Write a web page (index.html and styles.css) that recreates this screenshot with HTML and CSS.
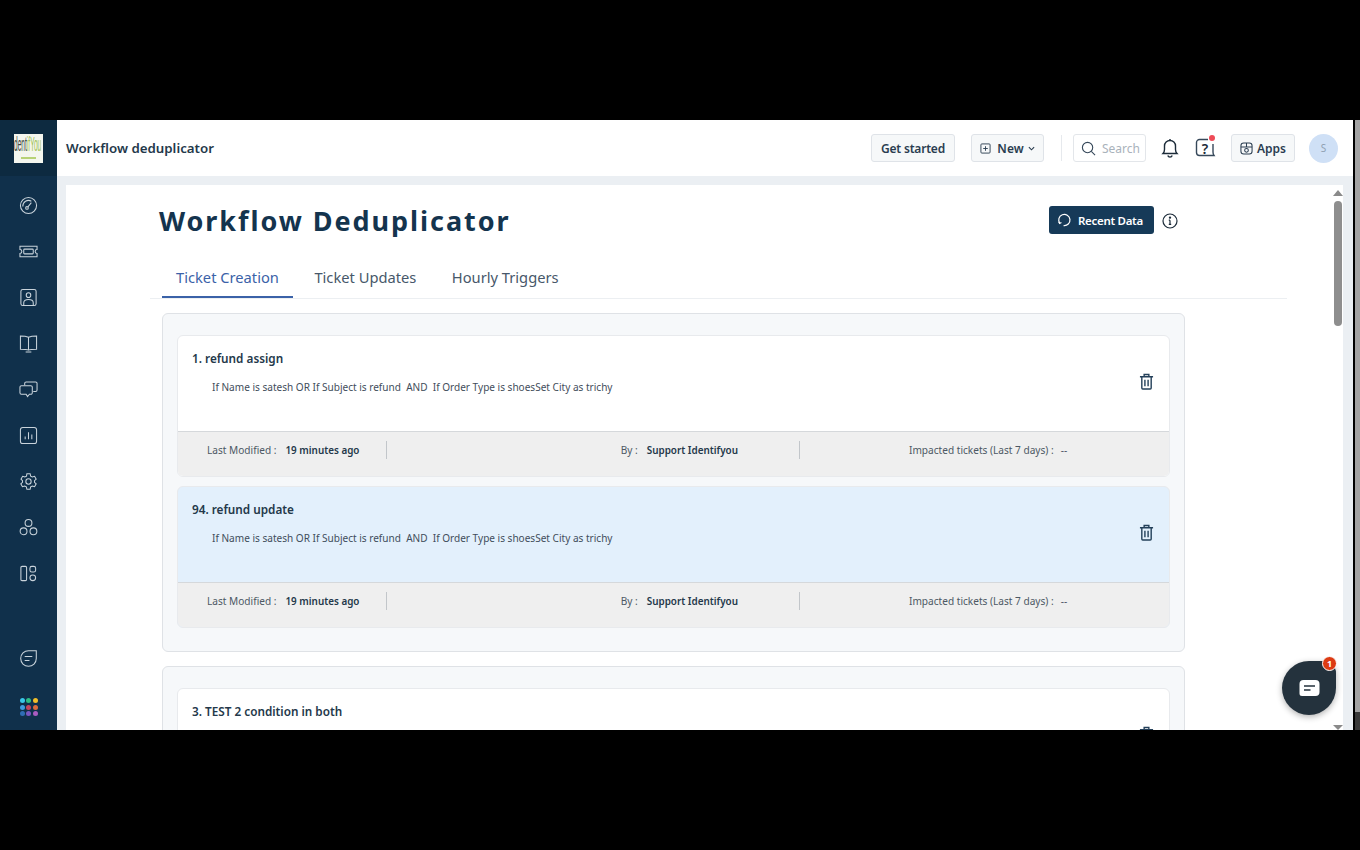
FILE: index.html
```html
<!DOCTYPE html>
<html lang="en">
<head>
    <meta charset="utf-8">
    <title>Workflow deduplicator</title>
    <link rel="stylesheet" href="styles.css">
</head>
<body>
    <div class="screen">
        <div class="app">
            <aside class="sidebar">
                <div class="logo-box">
                    <div class="logo">
                        <div class="logo-word"><span class="logo-dark">dent</span><span class="logo-green">ifYou</span></div>
                        <div class="logo-sub"></div>
                    </div>
                </div>
                <nav class="side-nav">
                    <svg class="side-icon" viewBox="0 0 20 20"><circle cx="10" cy="10" r="8.500"/><circle cx="8.400" cy="12.600" r="1.400"/><path d="M9.400 11.500 13 7M4 11a6 6 0 0 1 9-5.500"/></svg>
                    <svg class="side-icon" viewBox="0 0 20 20"><path d="M1 4.500h18V8a2 2 0 0 0 0 4v3.500H1V12a2 2 0 0 0 0-4z"/><rect x="5" y="7.500" width="10" height="5" rx=".8"/></svg>
                    <svg class="side-icon" viewBox="0 0 20 20"><rect x="2" y="1.500" width="16" height="17" rx="2"/><circle cx="10" cy="7.500" r="2.400"/><path d="M5 18.500v-3c0-2.200 1.800-3.500 5-3.500s5 1.300 5 3.500v3"/></svg>
                    <svg class="side-icon" viewBox="0 0 20 20"><path d="M10 3.500C8 2.500 5 2 1.500 2v14c3.500 0 6.500 0 8.500 1 2-1 5-1 8.500-1V2C15 2 12 2.500 10 3.500zM10 3.500V17M7 19h6"/></svg>
                    <svg class="side-icon" viewBox="0 0 20 20"><path d="M6 5.500V3.500A1.500 1.500 0 0 1 7.500 2h10A1.500 1.500 0 0 1 19 3.500v7a1.500 1.500 0 0 1-1.500 1.500H15"/><path d="M2.500 6h10A1.500 1.500 0 0 1 14 7.500v6a1.500 1.500 0 0 1-1.500 1.500H11l-2 2.500L7.500 15h-5A1.500 1.500 0 0 1 1 13.500v-6A1.500 1.500 0 0 1 2.500 6z"/></svg>
                    <svg class="side-icon" viewBox="0 0 20 20"><rect x="1.500" y="1.500" width="17" height="17" rx="2.500"/><path d="M6.500 14v-3M10 14V6.500M13.500 14V9"/></svg>
                    <svg class="side-icon" viewBox="0 0 20 20"><circle cx="10" cy="10" r="2.800"/><path d="M8.300 1.800h3.400l.6 2.500 1.700 1 2.400-.8 1.700 3-1.800 1.700v1.600l1.800 1.700-1.700 3-2.400-.8-1.700 1-.6 2.500H8.300l-.6-2.500-1.700-1-2.400.8-1.700-3 1.800-1.700V9.200L2.100 7.500l1.700-3 2.400.8 1.700-1z"/></svg>
                    <svg class="side-icon" viewBox="0 0 20 20"><circle cx="10" cy="5.200" r="3.600"/><circle cx="4.800" cy="14" r="3.600"/><circle cx="15.200" cy="14" r="3.600"/></svg>
                    <svg class="side-icon" viewBox="0 0 20 20"><rect x="2" y="2.500" width="6" height="15" rx="1.200"/><rect x="11.500" y="2.500" width="6" height="6" rx="2"/><circle cx="14.500" cy="14.500" r="3"/></svg>
                </nav>
                <div class="side-bottom">
                    <svg class="side-icon" viewBox="0 0 20 20"><path d="M10 1.800h8.200V10a8.200 8.200 0 1 1-8.200-8.200z"/><path d="M6 8h8M6 12h5"/></svg>
                    <div class="dots">
                        <i class="dot d1"></i><i class="dot d2"></i><i class="dot d3"></i>
                        <i class="dot d4"></i><i class="dot d5"></i><i class="dot d6"></i>
                        <i class="dot d7"></i><i class="dot d8"></i><i class="dot d9"></i>
                    </div>
                </div>
            </aside>

            <div class="main">
                <header class="topbar">
                    <div class="page-name">Workflow deduplicator</div>
                    <div class="top-actions">
                        <button class="top-btn started">Get started</button>
                        <button class="top-btn new">
                            <svg class="small-icon" viewBox="0 0 12 12"><rect x="1" y="1" width="10" height="10" rx="1"/><path d="M6 3.500v5M3.500 6h5"/></svg>
                            New
                            <svg class="caret" viewBox="0 0 8 5"><path d="M1 1l3 3 3-3"/></svg>
                        </button>
                        <span class="top-divider"></span>
                        <div class="search">
                            <svg class="search-icon" viewBox="0 0 16 16"><circle cx="7" cy="7" r="5.500"/><path d="M11 11l4 4"/></svg>
                            <span>Search</span>
                        </div>
                        <svg class="bell" viewBox="0 0 18 20"><path d="M2 15.500c1-1 1.500-2 1.500-4V8a5.500 5.500 0 0 1 11 0v3.500c0 2 .5 3 1.500 4z"/><path d="M9 1v1.500M6.800 17.500a2.300 2.300 0 0 0 4.400 0"/></svg>
                        <div class="help">
                            <svg class="help-icon" viewBox="0 0 22 22"><path d="M14 2.500H5.500a3 3 0 0 0-3 3v10a3 3 0 0 0 3 3H20c-.8-1-1-2-1-3.500V7"/></svg>
                            <span class="help-mark">?</span>
                            <i class="help-dot"></i>
                        </div>
                        <button class="top-btn apps">
                            <svg class="apps-icon" viewBox="0 0 14 14"><rect x="1" y="1" width="12" height="12" rx="3"/><path d="M7 1v4M1 5.500h12"/><circle cx="7" cy="9" r="2"/></svg>
                            Apps
                        </button>
                        <div class="avatar">S</div>
                    </div>
                </header>

                <div class="content-wrap">
                    <div class="content">
                        <div class="title-row">
                            <h1>Workflow Deduplicator</h1>
                            <div class="title-actions">
                                <button class="recent">
                                    <svg class="recent-icon" viewBox="0 0 16 16"><path d="M3 11A6 6 0 1 1 7 13.400"/><path d="M1.800 9.300l1 1.900 1.900-1"/></svg>
                                    Recent Data
                                </button>
                                <svg class="info" viewBox="0 0 16 16"><circle cx="8" cy="8" r="7"/><path d="M8 7.200v4M6.800 11.300h2.400M6.800 7.200H8"/><circle class="info-dot" cx="8" cy="4.600" r=".6"/></svg>
                            </div>
                        </div>

                        <div class="tabs">
                            <div class="tab active">Ticket Creation</div>
                            <div class="tab">Ticket Updates</div>
                            <div class="tab">Hourly Triggers</div>
                        </div>

                        <section class="group">
                            <div class="rule">
                                <div class="rule-body">
                                    <div>
                                        <div class="rule-name">1. refund assign</div>
                                        <div class="rule-desc">If Name is satesh OR If Subject is refund &nbsp;AND &nbsp;If Order Type is shoesSet City as trichy</div>
                                    </div>
                                    <svg class="trash" viewBox="0 0 16 18"><path d="M1 4h14M5.500 4V1.500h5V4M3 4v12a1 1 0 0 0 1 1h8a1 1 0 0 0 1-1V4M6.300 7v7M9.700 7v7"/></svg>
                                </div>
                                <div class="rule-foot">
                                    <div class="foot-col col-modified"><span>Last Modified :</span><b>19 minutes ago</b></div>
                                    <div class="foot-col col-by"><span>By :</span><b>Support Identifyou</b></div>
                                    <div class="foot-col col-impact"><span>Impacted tickets (Last 7 days) :</span><span>--</span></div>
                                </div>
                            </div>
                            <div class="rule selected">
                                <div class="rule-body">
                                    <div>
                                        <div class="rule-name">94. refund update</div>
                                        <div class="rule-desc">If Name is satesh OR If Subject is refund &nbsp;AND &nbsp;If Order Type is shoesSet City as trichy</div>
                                    </div>
                                    <svg class="trash" viewBox="0 0 16 18"><path d="M1 4h14M5.500 4V1.500h5V4M3 4v12a1 1 0 0 0 1 1h8a1 1 0 0 0 1-1V4M6.300 7v7M9.700 7v7"/></svg>
                                </div>
                                <div class="rule-foot">
                                    <div class="foot-col col-modified"><span>Last Modified :</span><b>19 minutes ago</b></div>
                                    <div class="foot-col col-by"><span>By :</span><b>Support Identifyou</b></div>
                                    <div class="foot-col col-impact"><span>Impacted tickets (Last 7 days) :</span><span>--</span></div>
                                </div>
                            </div>
                        </section>

                        <section class="group">
                            <div class="rule">
                                <div class="rule-body">
                                    <div>
                                        <div class="rule-name">3. TEST 2 condition in both</div>
                                    </div>
                                    <svg class="trash" viewBox="0 0 16 18"><path d="M1 4h14M5.500 4V1.500h5V4M3 4v12a1 1 0 0 0 1 1h8a1 1 0 0 0 1-1V4M6.300 7v7M9.700 7v7"/></svg>
                                </div>
                            </div>
                        </section>
                    </div>

                    <div class="scrollbar">
                        <i class="arrow-up"></i>
                        <i class="thumb"></i>
                        <i class="arrow-down"></i>
                    </div>

                    <div class="chat">
                        <svg class="chat-icon" viewBox="0 0 20 16"><path d="M4 0h12a4 4 0 0 1 4 4v8a4 4 0 0 1-4 4H2.500A2.500 2.500 0 0 1 0 13.500V4a4 4 0 0 1 4-4z"/><path class="chat-line" d="M4.500 6h11M4.500 10h6.500"/></svg>
                        <span class="chat-badge">1</span>
                    </div>
                </div>
            </div>
        </div>
        <div class="edge"></div>
    </div>
</body>
</html>
```

FILE: styles.css
```css
*{
    margin: 0;
    padding: 0;
    box-sizing: border-box;
}
body{
    font-family: "Noto Sans", "Open Sans", sans-serif;
    background-color: black;
    overflow: hidden;
}
button{
    font-family: inherit;
}
.screen{
    width: 1360px;
    height: 850px;
    padding-top: 120px;
    display: flex;
    align-items: flex-start;
    background-color: black;
}
.app{
    width: 1353px;
    height: 610px;
    display: flex;
    overflow: hidden;
    background-color: #ebeff3;
}
.edge{
    width: 5px;
    height: 610px;
    margin-left: 2px;
    background-color: #a3a3a3;
    border-bottom: 18px solid #3a3a3a;
}

/* sidebar */
.sidebar{
    width: 57px;
    flex-shrink: 0;
    display: flex;
    flex-direction: column;
    background-color: #10304b;
}
.logo-box{
    height: 56px;
    display: flex;
    justify-content: center;
    align-items: center;
    background-color: #0d2a40;
}
.logo{
    width: 29px;
    height: 29px;
    background-color: #f4f6ee;
    overflow: hidden;
}
.logo-word{
    width: 86px;
    font-family: "Liberation Sans", sans-serif;
    font-size: 20px;
    line-height: 21px;
    white-space: nowrap;
    transform: scaleX(.33);
    transform-origin: left;
}
.logo-dark{
    color: #3a3f3a;
}
.logo-green{
    color: #9dbf52;
}
.logo-sub{
    width: 15px;
    height: 2px;
    margin: 2px auto 0;
    background-color: #b7d276;
}
.side-nav{
    display: flex;
    flex-direction: column;
    align-items: center;
    gap: 27px;
    padding-top: 20px;
}
.side-icon{
    width: 19px;
    height: 19px;
    fill: none;
    stroke: #c9d3db;
    stroke-width: 1.100;
}
.side-bottom{
    margin-top: auto;
    padding-bottom: 14px;
    display: flex;
    flex-direction: column;
    align-items: center;
    gap: 30px;
}
.dots{
    display: grid;
    grid-template-columns: repeat(3, 5px);
    gap: 1.500px;
}
.dot{
    width: 5px;
    height: 5px;
    border-radius: 50%;
}
.d1{ background-color: #38c7e8; }
.d2{ background-color: #2ebd85; }
.d3{ background-color: #f2bd29; }
.d4{ background-color: #3f9be0; }
.d5{ background-color: #c4455f; }
.d6{ background-color: #d96b3c; }
.d7{ background-color: #2f6db5; }
.d8{ background-color: #7a56c0; }
.d9{ background-color: #a95cc0; }

/* top bar */
.main{
    flex: 1;
    min-width: 0;
    display: flex;
    flex-direction: column;
}
.topbar{
    height: 56px;
    flex-shrink: 0;
    display: flex;
    justify-content: space-between;
    align-items: center;
    padding: 0 15px 0 9px;
    background-color: white;
}
.page-name{
    font-size: 13.300px;
    font-weight: 600;
    color: #24384a;
}
.top-actions{
    display: flex;
    align-items: center;
}
.top-btn{
    height: 28px;
    display: flex;
    justify-content: center;
    align-items: center;
    border: 1px solid #dfe3e8;
    border-radius: 3px;
    background-color: #f6f8f9;
    color: #2a3d50;
    font-size: 12px;
    font-weight: 600;
}
.started{
    width: 84px;
    letter-spacing: -.2px;
}
.new{
    width: 73px;
    margin-left: 16px;
    gap: 6px;
}
.small-icon{
    width: 11px;
    height: 11px;
    fill: none;
    stroke: #2a3d50;
    stroke-width: 1;
}
.caret{
    width: 7px;
    height: 5px;
    margin-left: -2px;
    fill: none;
    stroke: #2a3d50;
    stroke-width: 1.300;
}
.top-divider{
    width: 1px;
    height: 26px;
    margin: 0 11px 0 17px;
    background-color: #e6e9ed;
}
.search{
    width: 73px;
    height: 28px;
    display: flex;
    align-items: center;
    gap: 6px;
    padding-left: 7px;
    border: 1px solid #e3e6ea;
    border-radius: 3px;
    font-size: 12px;
    color: #a9b2bb;
}
.search-icon{
    width: 15px;
    height: 15px;
    flex-shrink: 0;
    fill: none;
    stroke: #36485a;
    stroke-width: 1.200;
}
.bell{
    width: 18px;
    height: 20px;
    margin-left: 15px;
    fill: none;
    stroke: #1c2b39;
    stroke-width: 1.400;
}
.help{
    width: 22px;
    height: 22px;
    margin-left: 15px;
    position: relative;
    display: flex;
    justify-content: center;
    align-items: center;
}
.help-icon{
    position: absolute;
    inset: 0;
    fill: none;
    stroke: #36485a;
    stroke-width: 1.400;
}
.help-mark{
    font-size: 14px;
    font-weight: 600;
    color: #1c2b39;
}
.help-dot{
    position: absolute;
    top: -2px;
    right: 1px;
    width: 6px;
    height: 6px;
    border-radius: 50%;
    background-color: #ee4b57;
}
.apps{
    width: 64px;
    margin-left: 15px;
    gap: 4px;
}
.apps-icon{
    width: 13px;
    height: 13px;
    fill: none;
    stroke: #2a3d50;
    stroke-width: 1.100;
}
.avatar{
    width: 29px;
    height: 29px;
    margin-left: 14px;
    display: flex;
    justify-content: center;
    align-items: center;
    border-radius: 50%;
    background-color: #cfe0f6;
    font-size: 10px;
    color: #8fa0b3;
}

/* page */
.content-wrap{
    flex: 1;
    min-height: 0;
    margin: 9px 10px 0 9px;
    position: relative;
    overflow: hidden;
    background-color: white;
}
.content{
    padding-left: 84px;
}
.title-row{
    width: 1035px;
    height: 72px;
    padding: 0 0 2px 9px;
    display: flex;
    justify-content: space-between;
    align-items: center;
}
h1{
    font-size: 27px;
    font-weight: 700;
    letter-spacing: 1.950px;
    color: #14344e;
}
.title-actions{
    display: flex;
    align-items: center;
    gap: 8px;
}
.recent{
    width: 105px;
    height: 28px;
    display: flex;
    align-items: center;
    gap: 6px;
    padding-left: 8px;
    border: none;
    border-radius: 3px;
    background-color: #163a58;
    color: white;
    font-size: 11.500px;
    font-weight: 600;
    letter-spacing: -.3px;
}
.recent-icon{
    width: 15px;
    height: 15px;
    fill: none;
    stroke: white;
    stroke-width: 1.300;
}
.info{
    width: 16px;
    height: 16px;
    margin: 2px 7px 0 0;
    fill: none;
    stroke: #1c2b39;
    stroke-width: 1.200;
}
.info-dot{
    fill: #1c2b39;
}
.tabs{
    width: 1137px;
    height: 42px;
    display: flex;
    gap: 7.500px;
    padding-left: 12px;
    border-bottom: 1px solid #eceff2;
    margin-bottom: 14px;
}
.tab{
    height: 41px;
    padding: 0 14px;
    display: flex;
    align-items: center;
    border-bottom: 2px solid transparent;
    font-size: 14.700px;
    color: #47586a;
}
.tab.active{
    color: #3b62a8;
    border-bottom-color: #3b62a8;
}

/* rule groups */
.group{
    width: 1023px;
    margin-left: 12px;
    margin-bottom: 14px;
    padding: 21px 14px 23px;
    display: flex;
    flex-direction: column;
    gap: 9px;
    border: 1px solid #dfe2e6;
    border-radius: 6px;
    background-color: #f6f8fa;
}
.rule{
    border: 1px solid #e8eaed;
    border-radius: 6px;
    overflow: hidden;
    background-color: white;
}
.rule.selected{
    background-color: #e3f0fc;
}
.rule-body{
    height: 95px;
    padding: 13px 15px 0 14px;
    display: flex;
    justify-content: space-between;
    align-items: flex-start;
}
.rule-name{
    font-size: 11.750px;
    font-weight: 600;
    line-height: 18px;
    color: #24384a;
}
.rule-desc{
    margin: 13px 0 0 20px;
    font-size: 10.050px;
    line-height: 15px;
    color: #3f4d5b;
}
.trash{
    width: 15px;
    height: 17px;
    margin-top: 24px;
    fill: none;
    stroke: #24405a;
    stroke-width: 1.500;
}
.rule-foot{
    height: 45px;
    display: flex;
    align-items: flex-start;
    padding-top: 9px;
    border-top: 1px solid #d5d8db;
    background-color: #efefef;
    font-size: 10.100px;
    color: #4c5864;
}
.foot-col{
    height: 18px;
    display: flex;
    align-items: center;
    gap: 9px;
}
.foot-col b{
    font-size: 9.900px;
    font-weight: 600;
    color: #24384a;
}
.col-modified{
    width: 209px;
    padding-left: 29px;
    border-right: 1px solid #c2c6ca;
}
.col-by{
    width: 413px;
    justify-content: flex-end;
    padding-right: 61px;
    border-right: 1px solid #c2c6ca;
}
.col-impact{
    padding-left: 109px;
    gap: 7px;
}

/* scrollbar and chat */
.scrollbar{
    position: absolute;
    top: 0;
    right: 0;
    bottom: 0;
    width: 20px;
    background-color: white;
}
.arrow-up{
    position: absolute;
    top: 5px;
    left: 10px;
    border-left: 5px solid transparent;
    border-right: 5px solid transparent;
    border-bottom: 6px solid #8a8a8a;
}
.thumb{
    position: absolute;
    top: 16px;
    left: 11px;
    width: 8px;
    height: 125px;
    border-radius: 4px;
    background-color: #8e8e8e;
}
.arrow-down{
    position: absolute;
    bottom: 0;
    left: 10px;
    border-left: 5px solid transparent;
    border-right: 5px solid transparent;
    border-top: 5px solid #8a8a8a;
}
.chat{
    position: absolute;
    right: 7px;
    bottom: 15px;
    width: 54px;
    height: 54px;
    display: flex;
    justify-content: center;
    align-items: center;
    border-radius: 50%;
    border-top-right-radius: 12px;
    background-color: #24323d;
    box-shadow: 0 2px 6px rgba(0, 0, 0, .3);
}
.chat-icon{
    width: 21px;
    height: 16px;
    fill: white;
}
.chat-line{
    fill: none;
    stroke: #24323d;
    stroke-width: 1.300;
}
.chat-badge{
    position: absolute;
    top: -5px;
    right: -1px;
    width: 15px;
    height: 15px;
    display: flex;
    justify-content: center;
    align-items: center;
    border: 1px solid white;
    border-radius: 50%;
    background-color: #dc3b13;
    color: white;
    font-size: 9px;
    font-weight: 700;
}
```
